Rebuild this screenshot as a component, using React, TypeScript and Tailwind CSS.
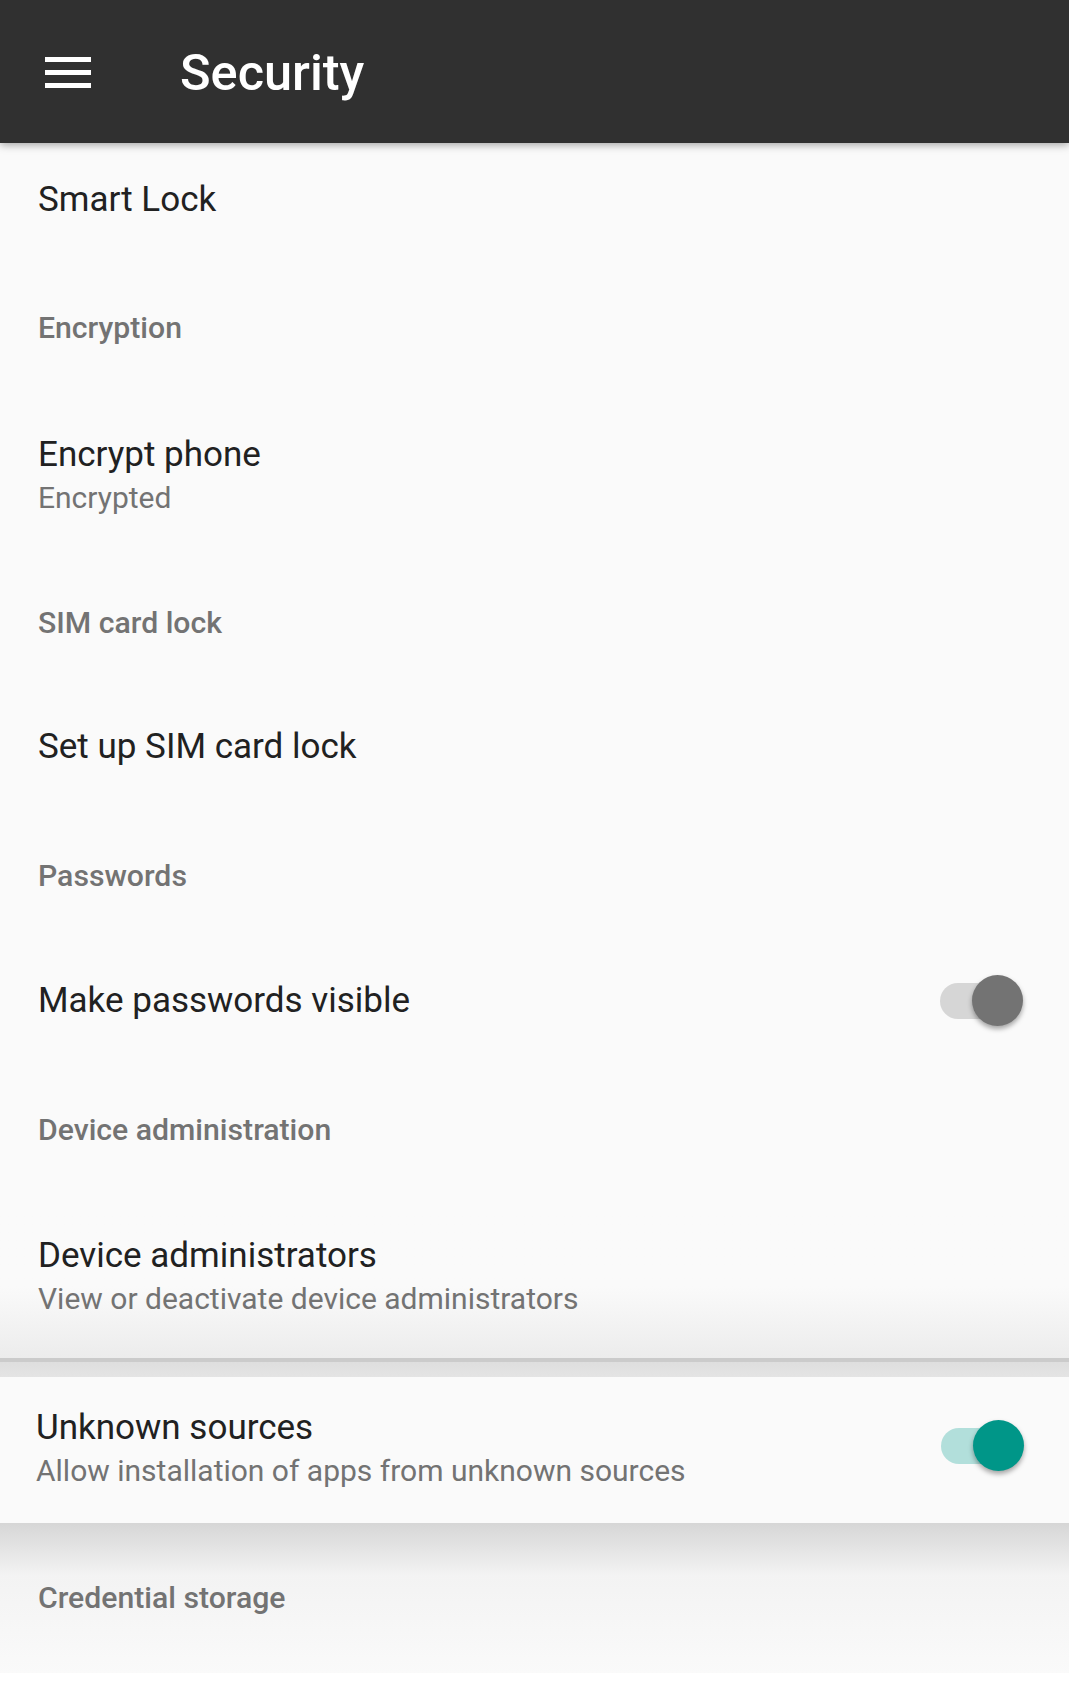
import React from "react";

// Reusable switch in the Material "on" position
function Switch({ track, thumb, extra = "" }: { track: string; thumb: string; extra?: string }) {
  return (
    <div className={`relative w-[83px] h-[51px] shrink-0 ${extra}`}>
      <div className={`absolute left-0 top-[8px] w-[76px] h-[36px] rounded-full ${track}`} />
      <div
        className={`absolute right-0 top-0 w-[51px] h-[51px] rounded-full shadow-[0_3px_5px_rgba(0,0,0,0.35)] ${thumb}`}
      />
    </div>
  );
}

function Category({ label, h }: { label: string; h: string }) {
  return (
    <div className={`flex items-center pl-[38px] ${h}`}>
      <span className="text-[30.2px] leading-[40px] font-medium text-[#737373]">{label}</span>
    </div>
  );
}

export default function App() {
  return (
    <div className="w-[1069px] h-[1681px] bg-white font-['Roboto',sans-serif] overflow-hidden">
      {/* Toolbar */}
      <header className="relative z-10 h-[143px] bg-[#303030] flex items-center shadow-[0_2px_8px_rgba(0,0,0,0.35)]">
        <div className="ml-[45px] flex flex-col gap-[8px] pt-[2px]">
          <div className="w-[46px] h-[5px] bg-white" />
          <div className="w-[46px] h-[5px] bg-white" />
          <div className="w-[46px] h-[5px] bg-white" />
        </div>
        <h1 className="ml-[89px] text-[50.5px] leading-none font-medium text-white pt-[3px]">Security</h1>
      </header>

      <main className="bg-[#fafafa] h-[1530px] text-[#212121]">
        {/* Smart Lock */}
        <div className="h-[112px] flex items-center pl-[38px] pt-[2px]">
          <span className="text-[35px] leading-[42px]">Smart Lock</span>
        </div>

        <Category label="Encryption" h="h-[146px]" />

        <div className="h-[146px] flex flex-col justify-center pl-[38px] pt-[5px]">
          <span className="text-[35px] leading-[42px]">Encrypt phone</span>
          <span className="text-[30px] leading-[44px] text-[#737373]">Encrypted</span>
        </div>

        <Category label="SIM card lock" h="h-[152px]" />

        <div className="h-[96px] flex items-center pl-[38px]">
          <span className="text-[35px] leading-[42px]">Set up SIM card lock</span>
        </div>

        <Category label="Passwords" h="h-[162px]" />

        <div className="h-[88px] flex items-center justify-between pl-[38px] pr-[46px]">
          <span className="text-[35px] leading-[42px]">Make passwords visible</span>
          <Switch track="bg-[#d6d6d6]" thumb="bg-[#737373]" extra="mb-[2px]" />
        </div>

        <Category label="Device administration" h="h-[170px]" />

        <div className="h-[143px] flex flex-col justify-center pl-[38px] pt-[5px] pb-[22px] bg-gradient-to-b from-[#fafafa] from-50% to-[#ececec]">
          <span className="text-[35px] leading-[42px]">Device administrators</span>
          <span className="text-[30px] leading-[44px] text-[#737373]">View or deactivate device administrators</span>
        </div>

        {/* divider and band above the raised card */}
        <div className="h-[4px] bg-[#cbcbcb]" />
        <div className="h-[15px] bg-gradient-to-b from-[#dedede] to-[#e4e4e4]" />

        {/* Raised card */}
        <div className="relative z-10 h-[146px] bg-[#fafafa] flex items-center justify-between pl-[36px] pr-[45px]">
          <div className="flex flex-col">
            <span className="text-[35px] leading-[42px]">Unknown sources</span>
            <span className="text-[30px] leading-[44px] text-[#737373]">Allow installation of apps from unknown sources</span>
          </div>
          <Switch track="bg-[#b2dfdb]" thumb="bg-[#009688]" extra="mb-[10px]" />
        </div>

        {/* Credential storage */}
        <div className="h-[150px] flex items-center pl-[38px] bg-gradient-to-b from-[#d6d6d6] via-[#f3f3f3] via-35% to-[#fafafa]">
          <span className="text-[30.2px] leading-[40px] font-medium text-[#737373]">Credential storage</span>
        </div>
      </main>
    </div>
  );
}
